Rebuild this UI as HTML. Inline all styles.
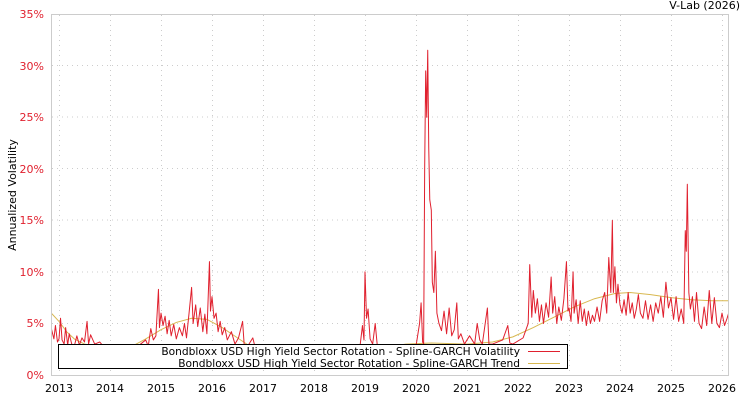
<!DOCTYPE html>
<html><head><meta charset="utf-8"><style>
body{margin:0;background:#fff;width:750px;height:400px;overflow:hidden}
text{font-family:"DejaVu Sans","Liberation Sans",sans-serif;font-size:11px}
.lg{font-size:10.65px}
</style></head><body>
<svg width="750" height="400" viewBox="0 0 750 400" xmlns="http://www.w3.org/2000/svg">
<rect x="51.5" y="14.5" width="677" height="361" fill="#fff" stroke="#ccc"/>
<g stroke="#ccc" stroke-dasharray="1,4" stroke-width="1">
<line x1="52" x2="728" y1="323.5" y2="323.5"/><line x1="52" x2="728" y1="272" y2="272"/>
<line x1="52" x2="728" y1="220" y2="220"/><line x1="52" x2="728" y1="168.5" y2="168.5"/>
<line x1="52" x2="728" y1="117" y2="117"/><line x1="52" x2="728" y1="65.5" y2="65.5"/>
<line y1="15" y2="375" x1="59.5" x2="59.5"/><line y1="15" y2="375" x1="110.5" x2="110.5"/>
<line y1="15" y2="375" x1="161.5" x2="161.5"/><line y1="15" y2="375" x1="212.5" x2="212.5"/>
<line y1="15" y2="375" x1="263.5" x2="263.5"/><line y1="15" y2="375" x1="314.5" x2="314.5"/>
<line y1="15" y2="375" x1="365.5" x2="365.5"/><line y1="15" y2="375" x1="416.5" x2="416.5"/>
<line y1="15" y2="375" x1="467.5" x2="467.5"/><line y1="15" y2="375" x1="518.5" x2="518.5"/>
<line y1="15" y2="375" x1="569.5" x2="569.5"/><line y1="15" y2="375" x1="620.5" x2="620.5"/>
<line y1="15" y2="375" x1="671.5" x2="671.5"/><line y1="15" y2="375" x1="722.5" x2="722.5"/>
</g>
<g fill="#e0202e" text-anchor="end">
<text x="44" y="379">0%</text><text x="44" y="327">5%</text><text x="44" y="276">10%</text>
<text x="44" y="224">15%</text><text x="44" y="173">20%</text><text x="44" y="121">25%</text>
<text x="44" y="70">30%</text><text x="44" y="18">35%</text>
</g>
<g fill="#000" text-anchor="middle">
<text x="59" y="392">2013</text><text x="110" y="392">2014</text><text x="161" y="392">2015</text>
<text x="212" y="392">2016</text><text x="263" y="392">2017</text><text x="314" y="392">2018</text>
<text x="365" y="392">2019</text><text x="416" y="392">2020</text><text x="467" y="392">2021</text>
<text x="518" y="392">2022</text><text x="569" y="392">2023</text><text x="620" y="392">2024</text>
<text x="671" y="392">2025</text><text x="722" y="392">2026</text>
</g>
<text x="740" y="9" text-anchor="end">V-Lab (2026)</text>
<text transform="translate(16,195) rotate(-90)" text-anchor="middle">Annualized Volatility</text>
<svg x="52" y="15" width="676" height="360" viewBox="52 15 676 360" overflow="hidden">
<g transform="translate(59,375) scale(51,-10.31)" fill="none">
<polyline vector-effect="non-scaling-stroke" stroke="#d8b850" stroke-width="1" points="-0.15,6 0,5.2 0.15,4.2 0.3,3.5 0.5,3 0.7,2.8 1,2.6 1.4,2.7 1.7,3.5 2,4.4 2.3,5.1 2.6,5.5 2.9,5.4 3.2,4.6 3.5,3.6 3.8,2.6 4.2,2 5,1.8 5.8,2.1 6.3,2.6 6.8,3 7.3,3.1 8,3 8.5,3.2 8.9,3.7 9.3,4.6 9.7,5.6 10.1,6.6 10.5,7.4 10.9,7.9 11.2,8 11.6,7.8 12,7.5 12.4,7.3 12.8,7.2 13.3,7.2"/>
<polyline vector-effect="non-scaling-stroke" stroke="#e0202e" stroke-width="1" stroke-linejoin="round" points="-0.15,4.5 -0.1,3.5 -0.07,4.8 -0.03,3.2 0,3.5 0.03,5.5 0.06,3.4 0.1,3 0.13,4.6 0.17,2.9 0.2,4 0.25,3 0.3,2.8 0.35,3.8 0.4,2.9 0.45,3.6 0.5,3.2 0.55,5.2 0.58,3 0.62,3.9 0.7,3 0.8,3.2 0.9,2.6 1,2.5 1.5,2.6 1.7,3.4 1.75,2.8 1.8,4.5 1.85,3.4 1.9,3.8 1.95,8.3 1.97,4.6 2,6 2.04,4.8 2.08,5.7 2.12,4 2.16,5.3 2.2,3.8 2.25,4.9 2.3,3.5 2.36,4.6 2.42,3.8 2.46,5 2.5,3.6 2.55,6 2.6,8.5 2.63,5 2.68,6.8 2.72,4.7 2.77,6.5 2.82,4.2 2.86,5.9 2.9,4 2.95,11 2.97,6.2 3,7.6 3.04,5.5 3.08,6 3.12,4.2 3.16,5.2 3.2,3.9 3.25,4.6 3.3,3.4 3.38,4.2 3.45,3 3.52,3.6 3.6,5.2 3.63,3 3.7,2.8 3.8,3.6 3.85,2.6 4,2.5 5.5,2.5 5.9,2.7 5.95,4.8 5.98,3.4 6,10 6.03,5.5 6.06,6.4 6.1,3.5 6.15,3 6.2,5 6.24,2.9 6.3,2.7 7,2.8 7.07,5 7.1,7 7.13,3.2 7.15,3 7.17,20 7.19,29.5 7.21,25 7.23,31.5 7.25,22 7.27,17 7.3,16 7.32,9 7.35,8 7.38,12 7.41,6 7.45,5 7.5,4.3 7.55,6.2 7.6,4 7.65,6.5 7.7,3.8 7.75,4.4 7.8,7 7.83,3.5 7.88,4 7.95,3 8.05,3.8 8.15,3 8.2,5 8.25,3.4 8.3,3 8.4,6.5 8.43,3 8.5,3 8.7,3.4 8.8,4.8 8.84,3.1 8.9,3 9.1,3.6 9.2,5 9.23,10.7 9.27,5.6 9.3,8.2 9.34,6 9.38,7.4 9.42,5.2 9.46,6.8 9.5,5 9.55,7 9.6,5.6 9.65,9.5 9.68,6 9.72,7.6 9.76,5 9.8,6.6 9.85,5.3 9.9,7.4 9.95,11 9.98,6.2 10,6.5 10.04,5.2 10.08,10 10.1,6 10.14,7.3 10.18,5 10.22,7.2 10.26,5.2 10.3,6.4 10.34,4.8 10.38,6.2 10.42,5 10.46,5.8 10.5,5.2 10.55,6.6 10.6,5.2 10.65,7.2 10.7,8 10.74,6 10.78,11.4 10.82,8 10.85,15 10.87,8 10.9,10.5 10.93,7 10.96,8.8 11,6.8 11.04,6 11.08,7.3 11.12,5.8 11.16,8 11.2,6 11.24,7 11.28,5.5 11.32,6.4 11.36,7.8 11.4,6 11.45,5.5 11.5,7.2 11.55,5.4 11.6,6.8 11.65,5.2 11.7,7 11.75,6 11.8,7.6 11.85,5.6 11.9,9 11.95,6.5 12,7.5 12.05,5.4 12.1,7.6 12.15,5.2 12.2,6.4 12.25,5 12.28,14 12.3,12 12.32,18.5 12.35,8 12.38,6.4 12.42,7.6 12.46,5.2 12.5,8 12.55,5 12.6,4.5 12.65,6.6 12.7,4.8 12.75,8.2 12.8,5 12.85,7.5 12.9,5 12.95,4.6 13,6 13.05,4.8 13.1,5.5 13.13,6"/>
</g>
</svg>
<rect x="58.5" y="344.5" width="509" height="24" fill="#fff" stroke="#000"/>
<text class="lg" x="520" y="355" text-anchor="end">Bondbloxx USD High Yield Sector Rotation - Spline-GARCH Volatility</text>
<text class="lg" x="520" y="367" text-anchor="end">Bondbloxx USD High Yield Sector Rotation - Spline-GARCH Trend</text>
<line x1="528" x2="560" y1="351.5" y2="351.5" stroke="#e0202e"/>
<line x1="528" x2="560" y1="363.5" y2="363.5" stroke="#d8b850"/>
</svg>
</body></html>
